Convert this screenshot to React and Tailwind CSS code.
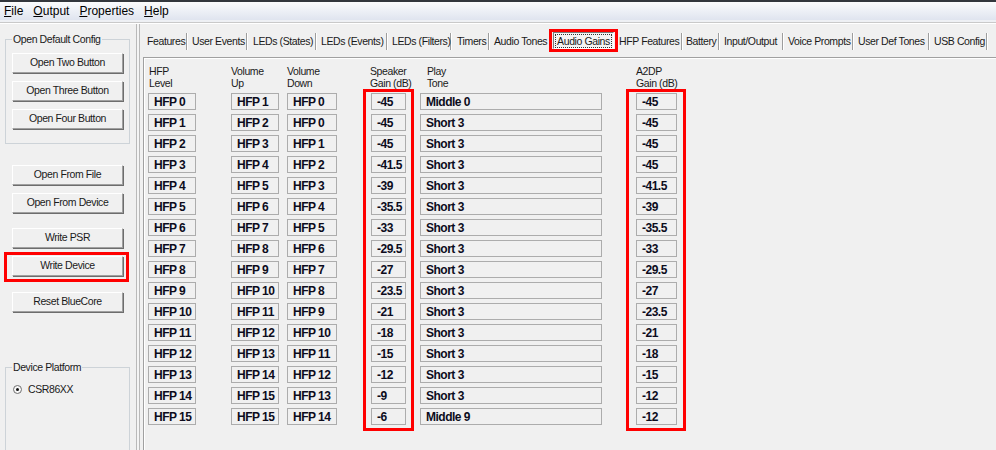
const TABS = [
  { label: 'Features', w: 'w-[43px]', pl: 'pl-[3px]' },
  { label: 'User Events', w: 'w-[60px]', pl: 'pl-[5px]' },
  { label: 'LEDs (States)', w: 'w-[69px]', pl: 'pl-[6px]' },
  { label: 'LEDs (Events)', w: 'w-[71px]', pl: 'pl-[5px]' },
  { label: 'LEDs (Filters)', w: 'w-[64px]', pl: 'pl-[5px]' },
  { label: 'Timers', w: 'w-[38px]', pl: 'pl-[6px]' },
  { label: 'Audio Tones', w: 'w-[62px]', pl: 'pl-[5px]' },
  { label: 'Audio Gains', w: 'w-[65px]', pl: 'pl-[5px]', active: true },
  { label: 'HFP Features', w: 'w-[66px]', pl: 'pl-[3px]' },
  { label: 'Battery', w: 'w-[37px]', pl: 'pl-[4px]' },
  { label: 'Input/Output', w: 'w-[64px]', pl: 'pl-[5px]' },
  { label: 'Voice Prompts', w: 'w-[70px]', pl: 'pl-[5px]' },
  { label: 'User Def Tones', w: 'w-[76px]', pl: 'pl-[5px]' },
  { label: 'USB Config', w: 'w-[58px]', pl: 'pl-[5px]' },
]

const LEVELS = Array.from({ length: 16 }, (_, i) => `HFP ${i}`)
const VOL_UP = [1, 2, 3, 4, 5, 6, 7, 8, 9, 10, 11, 12, 13, 14, 15, 15].map((n) => `HFP ${n}`)
const VOL_DOWN = [0, 0, 1, 2, 3, 4, 5, 6, 7, 8, 9, 10, 11, 12, 13, 14].map((n) => `HFP ${n}`)
const SPEAKER = ['-45', '-45', '-45', '-41.5', '-39', '-35.5', '-33', '-29.5', '-27', '-23.5', '-21', '-18', '-15', '-12', '-9', '-6']
const TONES = ['Middle 0', ...Array(14).fill('Short 3'), 'Middle 9']
const A2DP = ['-45', '-45', '-45', '-45', '-41.5', '-39', '-35.5', '-33', '-29.5', '-27', '-23.5', '-21', '-18', '-15', '-12', '-12']

const label = 'text-[10.5px] tracking-[-0.4px] text-[#1a1a1a]'

function Btn({ children }) {
  return (
    <div
      className={`w-[111px] h-[20px] shrink-0 flex items-center justify-center bg-[#f0f0f0] border border-t-white border-l-white border-r-[#a0a0a0] border-b-[#a0a0a0] shadow-[1px_1px_0_#6d6d6d] ${label}`}
    >
      {children}
    </div>
  )
}

function Group({ title, className, children }) {
  return (
    <div className={`relative shrink-0 ml-[5px] w-[125px] border border-[#cdd3d8] ${className}`}>
      <span className={`absolute left-[6px] -top-[7px] px-[1px] bg-[#f0f0f0] leading-[12px] ${label}`}>{title}</span>
      {children}
    </div>
  )
}

function Field({ value, w }) {
  return (
    <div
      className={`${w} h-[17px] flex items-center pl-[5px] border border-[#acacac] bg-[#f0f0f0] text-[12px] font-bold tracking-[-0.5px] leading-none text-[#0c0c1c]`}
    >
      {value}
    </div>
  )
}

function Header({ lines, pl = 'pl-0' }) {
  return (
    <div className={`h-[24px] ${pl} ${label} leading-[12px] whitespace-nowrap`}>
      <div>{lines[0]}</div>
      <div>{lines[1]}</div>
    </div>
  )
}

function Column({ lines, values, w, className = '', hpl }) {
  return (
    <div className={`flex flex-col ${className}`}>
      <Header lines={lines} pl={hpl} />
      <div className="flex flex-col gap-[4px] pt-[4px]">
        {values.map((v, i) => (
          <Field key={i} value={v} w={w} />
        ))}
      </div>
    </div>
  )
}

function RedColumn({ lines, values, w, className = '', hpl, pad }) {
  return (
    <div className={`flex flex-col ${className}`}>
      <Header lines={lines} pl={hpl} />
      <div className={`flex flex-col gap-[4px] border-[3px] border-[#ff0000] pt-[1px] pb-[3px] ${pad}`}>
        {values.map((v, i) => (
          <Field key={i} value={v} w={w} />
        ))}
      </div>
    </div>
  )
}

export default function App() {
  return (
    <div className="w-[996px] h-[450px] overflow-hidden bg-[#f0f0f0] flex flex-col font-['Liberation_Sans',Arial,sans-serif]">
      {/* menu bar */}
      <div className="h-[20px] shrink-0 border-t-2 border-[#33373d] bg-linear-to-b from-[#fbfcfd] to-[#dfe4ef] flex items-center pl-[4px] gap-[10px] text-[12px] text-black leading-none">
        <span><span className="underline">F</span>ile</span>
        <span><span className="underline">O</span>utput</span>
        <span><span className="underline">P</span>roperties</span>
        <span><span className="underline">H</span>elp</span>
      </div>
      <div className="h-[2px] shrink-0 bg-[#eef0f4]" />
      <div className="h-[2px] shrink-0 border-t border-[#c9c9c9] bg-white" />

      <div className="flex flex-1 min-h-0">
        {/* left panel */}
        <div className="w-[134px] flex flex-col shrink-0">
          <Group title="Open Default Config" className="mt-[15px] h-[105px]">
            <div className="flex flex-col gap-[8px] pt-[13px] pl-[6px]">
              <Btn>Open Two Button</Btn>
              <Btn>Open Three Button</Btn>
              <Btn>Open Four Button</Btn>
            </div>
          </Group>

          <div className="shrink-0 ml-[12px] mt-[21px] flex flex-col gap-[8px]">
            <Btn>Open From File</Btn>
            <Btn>Open From Device</Btn>
          </div>
          <div className="shrink-0 ml-[12px] mt-[15px]">
            <Btn>Write PSR</Btn>
          </div>
          <div className="shrink-0 ml-[4px] mt-[4px] w-[125px] border-[3px] border-[#ff0000] pl-[5px] pt-[1px] pb-[3px]">
            <Btn>Write Device</Btn>
          </div>
          <div className="shrink-0 ml-[12px] mt-[10px]">
            <Btn>Reset BlueCore</Btn>
          </div>

          <Group title="Device Platform" className="mt-[55px] h-[120px]">
            <div className="flex items-center gap-[6px] pt-[15px] pl-[7px] h-[28px]">
              <span className="w-[9px] h-[9px] rounded-full border border-[#707070] bg-[#f7f7f7] flex items-center justify-center">
                <span className="w-[3px] h-[3px] rounded-full bg-[#111]" />
              </span>
              <span className={label}>CSR86XX</span>
            </div>
          </Group>
        </div>

        {/* splitter */}
        <div className="ml-[2px] w-[4px] border-x border-[#b9b9b9] bg-[#f4f4f4] shrink-0" />

        {/* right panel */}
        <div className="ml-[3px] flex-1 flex flex-col min-w-0">
          <div className="pt-[9px] pl-[1px] flex h-[26px] shrink-0">
            {TABS.map((t) =>
              t.active ? (
                <div key={t.label} className={`relative ${t.w} h-[17px] flex`}>
                  <div className="ml-[2px] -mt-[1px] w-[61px] h-[17px] border border-t-[#7a7a7a] border-l-[#7a7a7a] border-b-white border-r-white bg-[#f4f4f4] flex items-center justify-center">
                    <span className={`outline-1 outline-dotted outline-[#333] px-[1px] leading-[12px] ${label}`}>{t.label}</span>
                  </div>
                  <div className="absolute -left-[2px] -top-[4px] w-[69px] h-[23px] border-[3px] border-[#ff0000] pointer-events-none" />
                </div>
              ) : (
                <div
                  key={t.label}
                  className={`${t.w} ${t.pl} h-[17px] flex items-center border-r border-[#9d9d9d] shadow-[1px_0_0_#ffffff] whitespace-nowrap ${label}`}
                >
                  {t.label}
                </div>
              )
            )}
          </div>

          <div className="mt-[7px] flex-1 border-t border-l border-[#a0a0a0] shadow-[inset_1px_1px_0_#ffffff] pt-[7px] pl-[4px]">
            <div className="flex items-start">
              <Column lines={['HFP', 'Level']} values={LEVELS} w="w-[48px]" hpl="pl-[1px]" />
              <Column lines={['Volume', 'Up']} values={VOL_UP} w="w-[48px]" className="ml-[35px]" />
              <Column lines={['Volume', 'Down']} values={VOL_DOWN} w="w-[50px]" className="ml-[8px]" />
              <RedColumn
                lines={['Speaker', 'Gain (dB)']}
                values={SPEAKER}
                w="w-[35px]"
                className="ml-[26px]"
                hpl="pl-[7px]"
                pad="pl-[5px] pr-[5px]"
              />
              <Column lines={['Play', 'Tone']} values={TONES} w="w-[182px]" className="ml-[6px]" hpl="pl-[7px]" />
              <RedColumn
                lines={['A2DP', 'Gain (dB)']}
                values={A2DP}
                w="w-[41px]"
                className="ml-[24px]"
                hpl="pl-[10px]"
                pad="pl-[7px] pr-[6px]"
              />
            </div>
          </div>
        </div>
      </div>
    </div>
  )
}
